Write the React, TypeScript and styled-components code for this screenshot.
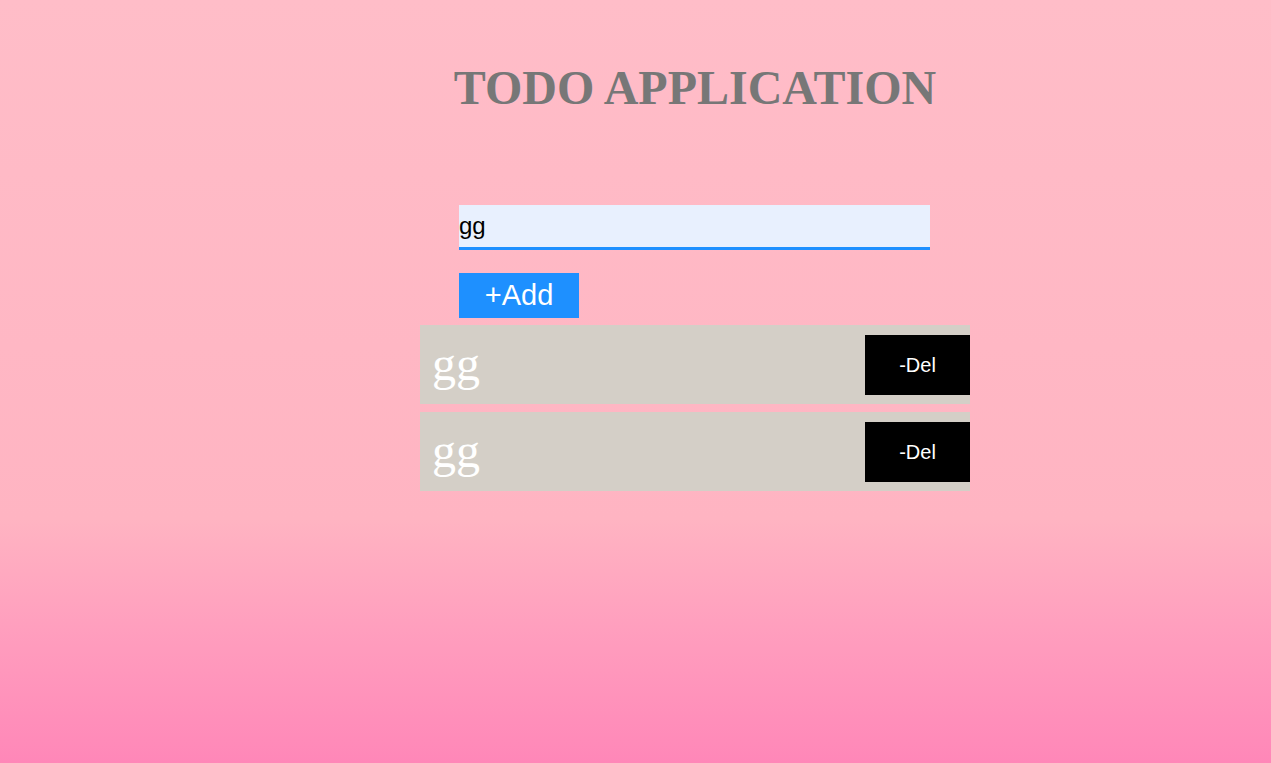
import React, { useState } from "react";
import styled, { createGlobalStyle } from "styled-components";

const GlobalStyle = createGlobalStyle`
  html, body {
    margin: 0;
    padding: 0;
  }
  body {
    min-height: 100vh;
    background: linear-gradient(to bottom, #ffbdc8 0%, #ffb4c2 68%, #ff9fbe 82%, #ff87b8 100%);
    background-attachment: fixed;
  }
`;

const Page = styled.div`
  min-height: 100vh;
  display: flex;
  justify-content: flex-start;
  padding-left: 420px;
  box-sizing: border-box;
`;

const Container = styled.main`
  width: 550px;
  display: flex;
  flex-direction: column;
`;

const Title = styled.h1`
  margin: 64px 0 0;
  font-family: "Liberation Serif", "Times New Roman", serif;
  font-weight: bold;
  font-size: 48px;
  line-height: 48px;
  color: #777777;
  text-align: center;
`;

const Form = styled.form`
  margin: 93px 0 0 39px;
  display: flex;
  flex-direction: column;
  align-items: flex-start;
`;

const Input = styled.input`
  width: 471px;
  height: 45px;
  box-sizing: border-box;
  border: none;
  border-bottom: 3px solid #1e90ff;
  background: #e8f0fe;
  outline: none;
  padding: 0;
  font-family: "Liberation Sans", Arial, sans-serif;
  font-size: 24px;
  color: #000;
`;

const AddButton = styled.button`
  margin-top: 23px;
  width: 120px;
  height: 45px;
  border: none;
  background: #1e90ff;
  color: #fff;
  font-family: "Liberation Sans", Arial, sans-serif;
  font-size: 29px;
  padding: 0;
  cursor: pointer;
`;

const List = styled.ul`
  list-style: none;
  margin: 7px 0 0;
  padding: 0;
  display: flex;
  flex-direction: column;
  gap: 8px;
`;

const Row = styled.li`
  height: 79px;
  background: #d4cfc7;
  display: flex;
  justify-content: space-between;
  align-items: flex-start;
`;

const ItemText = styled.span`
  margin: 15px 0 0 12px;
  font-family: "Liberation Serif", "Times New Roman", serif;
  font-size: 48px;
  line-height: 48px;
  color: #ffffff;
`;

const DelButton = styled.button`
  margin-top: 10px;
  width: 105px;
  height: 60px;
  border: none;
  background: #000;
  color: #fff;
  font-family: "Liberation Sans", Arial, sans-serif;
  font-size: 20px;
  padding: 0;
  cursor: pointer;
`;

export default function App() {
  const [value, setValue] = useState("gg");
  const [items, setItems] = useState<string[]>(["gg", "gg"]);

  return (
    <>
      <GlobalStyle />
      <Page>
        <Container>
          <Title>TODO APPLICATION</Title>
          <Form
            onSubmit={(e) => {
              e.preventDefault();
              if (value.trim()) setItems([...items, value]);
            }}
          >
            <Input value={value} onChange={(e) => setValue(e.target.value)} />
            <AddButton type="submit">+Add</AddButton>
          </Form>
          <List>
            {items.map((item, i) => (
              <Row key={i}>
                <ItemText>{item}</ItemText>
                <DelButton onClick={() => setItems(items.filter((_, j) => j !== i))}>-Del</DelButton>
              </Row>
            ))}
          </List>
        </Container>
      </Page>
    </>
  );
}
